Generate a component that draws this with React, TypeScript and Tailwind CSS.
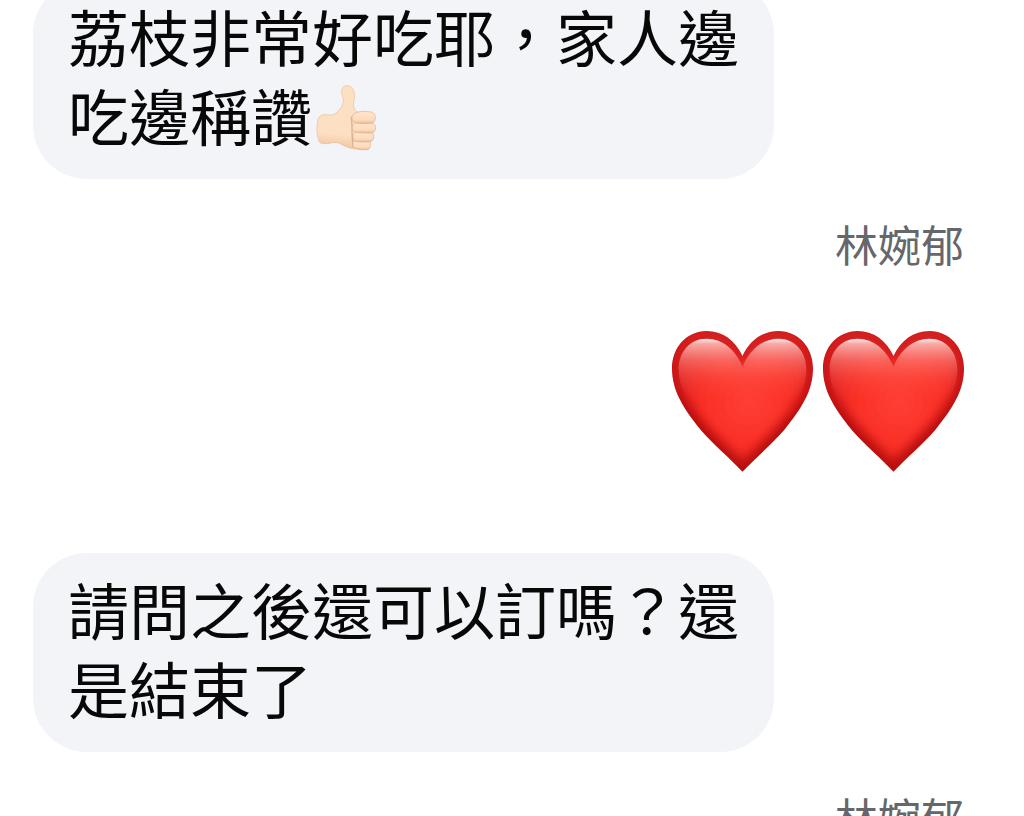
import { useId, type ReactNode } from 'react';

type Message = {
  id: number;
  kind: 'bubble' | 'name' | 'hearts';
  text: string;
};

const messages: Message[] = [
  { id: 1, kind: 'bubble', text: '荔枝非常好吃耶，家人邊吃邊稱讚👍🏻' },
  { id: 2, kind: 'name', text: '林婉郁' },
  { id: 3, kind: 'hearts', text: '❤️❤️' },
  { id: 4, kind: 'bubble', text: '請問之後還可以訂嗎？還是結束了' },
  { id: 5, kind: 'name', text: '林婉郁' },
];

const HEART =
  'M272 122C250 75 212 47 164 47C104 47 60 96 60 160C60 226 94 280 146 344C184 388 232 428 272 470C312 428 360 388 398 344C450 280 484 226 484 160C484 96 440 47 380 47C332 47 294 75 272 122Z';
const HEART_FACE =
  'M272 154C250 103 214 71 164 70C114 70 80 110 80 162C80 216 108 264 156 324C190 362 236 402 272 440C308 402 354 362 388 324C436 264 464 216 464 162C464 110 430 70 380 70C330 71 294 103 272 154Z';

function Heart() {
  const id = useId();
  return (
    <svg viewBox="60 47 424 424" className="size-[141px]" role="img" aria-label="❤️">
      <defs>
        <linearGradient id={`${id}rim`} x1="0" y1="0" x2="0" y2="1">
          <stop offset="0" stopColor="#cf2020" />
          <stop offset="0.3" stopColor="#c41317" />
          <stop offset="0.65" stopColor="#b3090b" />
          <stop offset="1" stopColor="#b5100e" />
        </linearGradient>
        <linearGradient id={`${id}shine`} gradientUnits="userSpaceOnUse" x1="0" y1="70" x2="0" y2="260">
          <stop offset="0" stopColor="#ffffff" stopOpacity="0.95" />
          <stop offset="0.08" stopColor="#ffd8d4" stopOpacity="0.75" />
          <stop offset="0.35" stopColor="#ff9a92" stopOpacity="0.5" />
          <stop offset="0.65" stopColor="#ff6a60" stopOpacity="0.25" />
          <stop offset="1" stopColor="#ff4438" stopOpacity="0" />
        </linearGradient>
        <radialGradient id={`${id}body`} gradientUnits="userSpaceOnUse" cx="290" cy="260" r="230">
          <stop offset="0" stopColor="#ff3f34" />
          <stop offset="0.55" stopColor="#fb3027" />
          <stop offset="1" stopColor="#e3221e" />
        </radialGradient>
        <filter id={`${id}soft`} x="-10%" y="-10%" width="120%" height="120%">
          <feGaussianBlur stdDeviation="16" />
        </filter>
        <clipPath id={`${id}clip`}>
          <path d={HEART} />
        </clipPath>
      </defs>
      <path d={HEART} fill={`url(#${id}rim)`} />
      <g clipPath={`url(#${id}clip)`}>
        <path d={HEART_FACE} fill={`url(#${id}body)`} filter={`url(#${id}soft)`} />
      </g>
      <path d={HEART_FACE} fill={`url(#${id}shine)`} />
    </svg>
  );
}

function ThumbsUp() {
  const id = useId();
  return (
    <svg
      viewBox="48 28 183 200"
      className="ml-1 inline-block h-[66px] w-[61px] align-[-10px]"
      role="img"
      aria-label="👍🏻"
    >
      <defs>
        <linearGradient id={`${id}skin`} gradientUnits="userSpaceOnUse" x1="120" y1="30" x2="100" y2="225">
          <stop offset="0" stopColor="#fde0c2" />
          <stop offset="0.75" stopColor="#fddfc4" />
          <stop offset="1" stopColor="#eec19c" />
        </linearGradient>
        <linearGradient id={`${id}finger`} x1="0" y1="0" x2="0" y2="1">
          <stop offset="0" stopColor="#ffe5cc" />
          <stop offset="0.7" stopColor="#fcdbbe" />
          <stop offset="1" stopColor="#e9b893" />
        </linearGradient>
      </defs>
      <path
        d="M125 44C126 34 134 30 143 30C155 31 162 42 164 56C165 69 160 79 161 91C162 101 168 108 175 111L196 160L188 222C168 224 148 219 136 214C122 207 114 201 100 202C87 205 73 208 61 204C51 197 47 165 52 139C54 126 58 119 69 118C82 117 91 121 101 117C116 109 127 94 130 78C131 67 123 56 125 44Z"
        fill={`url(#${id}skin)`}
        stroke="#e9bd98"
        strokeWidth="2"
      />
      <path d="M154 124C158 151 154 184 160 216" fill="none" stroke="#cf9c77" strokeWidth="4" opacity="0.7" />
      <g fill={`url(#${id}finger)`} stroke="#dfb08c" strokeWidth="2">
        <path d="M166 196L206 196C215 200 214 221 204 224C188 226 172 222 163 218C156 212 158 199 166 196Z" />
        <path d="M168 170L212 170C225 173 225 194 214 199C198 202 180 201 167 199C156 194 157 174 168 170Z" />
        <path d="M170 142L216 142C231 145 232 168 218 173C202 175 182 173 168 171C153 166 155 145 170 142Z" />
        <path d="M174 110C190 107 204 108 216 110C230 114 231 139 217 144C200 146 184 145 168 143C151 137 152 114 174 110Z" />
      </g>
    </svg>
  );
}

// swap the thumbs up emoji for its drawing
function renderText(text: string): ReactNode {
  const [before, after] = text.split('👍🏻');
  if (after === undefined) return text;
  return (
    <>
      {before}
      <ThumbsUp />
      {after}
    </>
  );
}

export default function App() {
  return (
    <main
      lang="zh-Hant"
      className="h-screen overflow-hidden bg-white font-['Noto_Sans_CJK_TC',sans-serif]"
    >
      <div className="-mt-5 flex flex-col pr-[60px] pl-[33px]">
        {messages.map((message) => {
          if (message.kind === 'hearts') {
            return (
              <div key={message.id} className="mt-[62px] mb-[81px] flex gap-[10px] self-end">
                <Heart />
                <Heart />
              </div>
            );
          }
          if (message.kind === 'name') {
            return (
              <p key={message.id} className="mt-[38px] self-end text-[43px] leading-[52px] text-[#65676b]">
                {message.text}
              </p>
            );
          }
          return (
            <div
              key={message.id}
              className="max-w-[741px] self-start rounded-[54px] bg-[#f2f4f8] px-[35px] pt-4 pb-[25px] text-[61px] leading-[79px] text-[#080809]"
            >
              <p>{renderText(message.text)}</p>
            </div>
          );
        })}
      </div>
    </main>
  );
}
